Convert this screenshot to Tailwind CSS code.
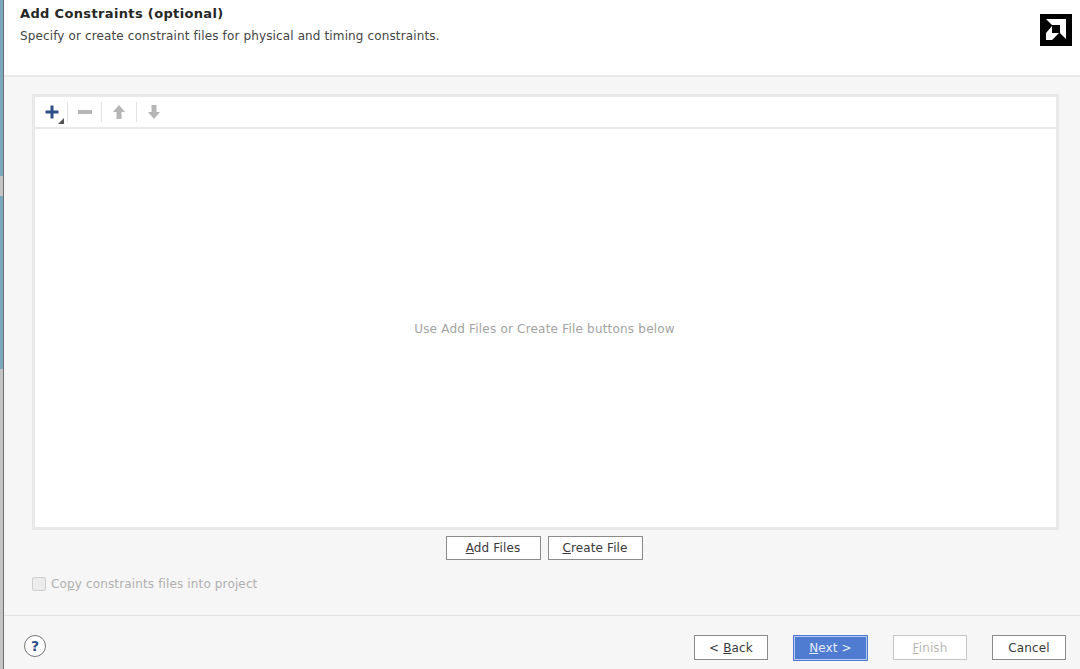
<!DOCTYPE html>
<html lang="en">
<head>
  <meta charset="UTF-8">
  <title>Add Constraints (optional)</title>
  <script src="https://cdn.jsdelivr.net/npm/@tailwindcss/browser@4"></script>
</head>
<body class="w-[1080px] h-[669px] overflow-hidden flex bg-[#f6f6f6] font-['DejaVu_Sans',sans-serif] text-[#3a3a3a]">
  <!-- window behind the dialog -->
  <div class="w-[4px] h-full flex flex-col border-r border-[#6f6f6f]">
    <div class="h-[176px] bg-[#7ba7bf]"></div>
    <div class="h-[20px] bg-[#c4c4c4]"></div>
    <div class="h-[173px] bg-[#7ba7bf]"></div>
    <div class="flex-1 bg-[#c4c4c4]"></div>
  </div>

  <div class="flex-1 flex flex-col">
    <!-- HEADER -->
    <header class="h-[77px] shrink-0 bg-white border-b-2 border-[#e9e9e9] flex justify-between pl-4 pr-2">
      <div>
        <h1 class="text-[13px] leading-[16px] font-bold text-[#262626] mt-[6px] tracking-[0.35px]">Add Constraints (optional)</h1>
        <p class="text-[12px] leading-[16px] mt-[6px] text-[#444] tracking-[0.13px]">Specify or create constraint files for physical and timing constraints.</p>
      </div>
      <svg class="w-[32px] h-[32px] mt-[14px]" viewBox="0 0 32 32">
        <rect width="32" height="32" fill="#000"/>
        <path d="M6 5H26V25L20 19V11H12Z" fill="#fff"/>
        <path d="M12 12L6 19V26H12L19 19H12Z" fill="#fff"/>
      </svg>
    </header>

    <!-- BODY -->
    <main class="flex-1 flex flex-col pl-[28px] pr-[21px] pt-[17px]">
      <section class="h-[436px] shrink-0 border-[3px] border-[#e9e9e9] bg-white flex flex-col">
        <div class="h-[32px] shrink-0 border-b-2 border-[#e9e9e9] flex items-center pl-[5px]">
          <span class="relative w-[24px] h-[24px] flex items-center justify-center">
            <svg class="w-[16px] h-[16px]" viewBox="0 0 16 16"><path d="M6.500 1.500h3v5h5v3h-5v5h-3v-5h-5v-3h5z" fill="#2f4d86"/></svg>
            <svg class="absolute right-0 bottom-0 w-[6px] h-[6px]" viewBox="0 0 6 6"><path d="M6 0V6H0Z" fill="#555"/></svg>
          </span>
          <span class="w-px h-[20px] bg-[#e2e2e2] ml-[3px]"></span>
          <span class="w-[33px] flex justify-center">
            <svg class="w-[16px] h-[16px]" viewBox="0 0 16 16"><rect x="1" y="6" width="14" height="4" fill="#b5b5b5"/></svg>
          </span>
          <span class="w-px h-[20px] bg-[#e2e2e2]"></span>
          <span class="w-[34px] flex justify-center">
            <svg class="w-[16px] h-[16px]" viewBox="0 0 16 16"><path d="M8 1l6 7h-3.500v7h-5V8H2z" fill="#b5b5b5"/></svg>
          </span>
          <span class="w-px h-[20px] bg-[#e2e2e2]"></span>
          <span class="w-[34px] flex justify-center">
            <svg class="w-[16px] h-[16px]" viewBox="0 0 16 16"><path d="M8 15l6-7h-3.500V1h-5v7H2z" fill="#b5b5b5"/></svg>
          </span>
        </div>
        <div class="flex-1 flex items-center justify-center text-[12px] text-[#a3a3a3] tracking-[0.2px] pr-[2px] pt-[1px]">Use Add Files or Create File buttons below</div>
      </section>

      <div class="flex justify-center gap-[7px] mt-[6px] pr-[3px]">
        <button class="w-[95px] h-[24px] bg-white border border-[#8a8a8a] text-[12px] tracking-[0.13px]"><span class="underline">A</span>dd Files</button>
        <button class="w-[95px] h-[24px] bg-white border border-[#8a8a8a] text-[12px] tracking-[0.13px]"><span class="underline">C</span>reate File</button>
      </div>

      <label class="flex items-center gap-[5px] mt-[15px] text-[12px] text-[#b0b0b0] tracking-[0.14px]">
        <span class="w-[14px] h-[14px] rounded-[2px] border border-[#cfcfcf] bg-[#ececec]"></span>
        <span>Co<span class="underline">p</span>y constraints files into project</span>
      </label>
    </main>

    <!-- FOOTER -->
    <footer class="h-[54px] shrink-0 border-t border-[#e4e4e4] flex items-start pl-[20px] pr-[14px]">
      <span class="w-[22px] h-[22px] mt-[19px] rounded-full border-[1.5px] border-[#777] bg-white flex items-center justify-center text-[14px] font-bold text-[#2f4d86]">?</span>
      <div class="ml-auto flex items-start mt-[19px]">
        <button class="w-[74px] h-[25px] bg-white border border-[#8a8a8a] text-[12px] tracking-[0.13px]">&lt; <span class="underline">B</span>ack</button>
        <button class="w-[75px] h-[26px] ml-[25px] bg-[#4f7bd0] border border-[#4f7bd0] outline outline-1 -outline-offset-2 outline-[#b7c9ec] text-[12px] text-[#e6ecf8] tracking-[0.13px]"><span class="underline">N</span>ext &gt;</button>
        <button class="w-[74px] h-[25px] ml-[25px] bg-white border border-[#c6c6c6] text-[12px] text-[#b8b8b8] tracking-[0.13px]"><span class="underline">F</span>inish</button>
        <button class="w-[74px] h-[25px] ml-[25px] bg-white border border-[#8a8a8a] text-[12px] tracking-[0.13px]">Cancel</button>
      </div>
    </footer>
  </div>
</body>
</html>
